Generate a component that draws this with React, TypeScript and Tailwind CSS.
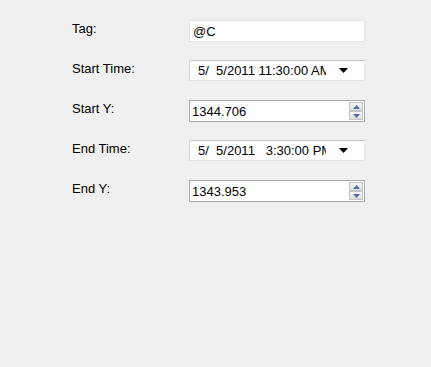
export default function App() {
  const font = { fontFamily: '"Liberation Sans", Arial, sans-serif' }
  return (
    <div className="w-[431px] h-[367px] bg-[#f0f0f0] text-[13px] text-black" style={font}>
      <div className="grid grid-cols-[117px_176px] auto-rows-[21px] gap-y-[19px] pl-[72px] pt-[20px]">
        <Label text="Tag:" />
        <TextBox value="@C" />

        <Label text="Start Time:" />
        <DatePicker value="5/  5/2011 11:30:00 AM" />

        <Label text="Start Y:" />
        <Numeric value="1344.706" />

        <Label text="End Time:" />
        <DatePicker value="5/  5/2011   3:30:00 PM" />

        <Label text="End Y:" />
        <Numeric value="1343.953" />
      </div>
    </div>
  )
}

function Label({ text }: { text: string }) {
  return <div className="leading-[15px] pt-[1px]">{text}</div>
}

function TextBox({ value }: { value: string }) {
  return (
    <div className="h-[22px] bg-white border border-[#e3e3e3] pl-[3px] flex items-center leading-[15px]">
      {value}
    </div>
  )
}

// the reference clips the AM/PM part inside the picker
function DatePicker({ value }: { value: string }) {
  return (
    <div className="h-[21px] bg-white border border-[#e3e3e3] border-t-[#c9c9c9] border-l-[#d8d8d8] flex items-center">
      <div className="w-[128px] ml-[8px] overflow-hidden whitespace-pre leading-[15px]">{value}</div>
      <svg width="9" height="5" viewBox="0 0 9 5" className="ml-[13px]">
        <polygon points="0,0 9,0 4.5,5" fill="#000" />
      </svg>
    </div>
  )
}

function Numeric({ value }: { value: string }) {
  return (
    <div className="h-[22px] bg-white border border-[#a9a9a9] flex items-stretch">
      <div className="flex-1 pl-[2px] flex items-center leading-[15px]">{value}</div>
      <div className="w-[16px] flex flex-col p-[1px]">
        <SpinButton up />
        <SpinButton />
      </div>
    </div>
  )
}

function SpinButton({ up }: { up?: boolean }) {
  return (
    <div className="flex-1 flex items-center justify-center border border-[#c4c4c4] bg-gradient-to-b from-[#f6f6f6] to-[#dedede]">
      <svg width="7" height="4" viewBox="0 0 7 4">
        {up ? (
          <polygon points="0,4 7,4 3.5,0" fill="#4f6aa8" />
        ) : (
          <polygon points="0,0 7,0 3.5,4" fill="#4f6aa8" />
        )}
      </svg>
    </div>
  )
}
